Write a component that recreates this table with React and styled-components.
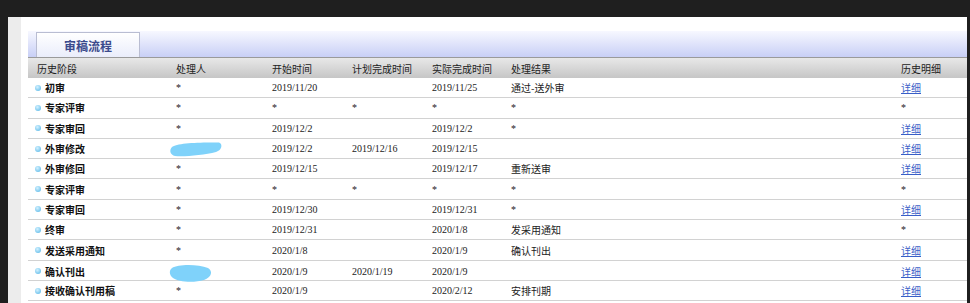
import React from "react";
import styled, { createGlobalStyle } from "styled-components";

const GlobalStyle = createGlobalStyle`
  html, body {
    margin: 0;
    padding: 0;
    background: #1f1f1f;
    overflow: hidden;
  }
`;

const Frame = styled.div`
  display: flex;
  height: 100vh;
  padding: 17px 3px 0 8px;
  box-sizing: border-box;
`;

const Gutter = styled.div`
  width: 13px;
  flex-shrink: 0;
  background: #ececec;
`;

const Panel = styled.div`
  flex: 1;
  background: #fff;
  padding: 14px 0 0 7px;
  overflow: hidden;
`;

const TabBar = styled.div`
  display: flex;
  align-items: flex-end;
  height: 26px;
  padding-left: 8px;
  background: linear-gradient(#f7f8ff, #c8cff6);
`;

const Tab = styled.div`
  width: 104px;
  height: 25px;
  display: flex;
  align-items: center;
  justify-content: center;
  box-sizing: border-box;
  border: 1px solid #b9bdd2;
  border-bottom: none;
  background: linear-gradient(#ffffff, #eaedfb);
  color: #3b4a8c;
  font: bold 12px "Noto Sans CJK SC", sans-serif;
`;

const columns = "148px 96px 80px 80px 79px 390px 1fr";

const HeadRow = styled.div`
  display: grid;
  grid-template-columns: ${columns};
  height: 20px;
  align-items: center;
  border-top: 1px solid #9a9a9a;
  background: linear-gradient(#e8e8e8, #c6c6c6);
  font: 10px "Noto Sans CJK SC", sans-serif;
  color: #222;
`;

const HeadCell = styled.div`
  padding-left: ${(p) => (p.$first ? "9px" : "0")};
  white-space: nowrap;
`;

const Row = styled.div`
  display: grid;
  grid-template-columns: ${columns};
  height: 20.3px;
  box-sizing: border-box;
  align-items: center;
  border-bottom: 1px solid #d2d2d2;
  font-size: 10px;
  color: #222;
`;

const Cell = styled.div`
  display: flex;
  align-items: center;
  white-space: nowrap;
  font-family: ${(p) =>
    p.$serif ? '"Liberation Serif", serif' : '"Noto Sans CJK SC", sans-serif'};
`;

const StageCell = styled(Cell)`
  padding-left: 7px;
  font-weight: bold;
  color: #111;
`;

const Bullet = styled.span`
  width: 6px;
  height: 6px;
  border-radius: 50%;
  margin-right: 4px;
  background: radial-gradient(circle at 40% 35%, #d6f2ff, #4db3e6);
`;

const Link = styled.a`
  color: #3a5fc8;
  text-decoration: underline;
  font-family: "Noto Sans CJK SC", sans-serif;
`;

const Blob = styled.svg`
  margin-left: -6px;
  overflow: visible;
`;

const Redact = ({ wide }) =>
  wide ? (
    <Blob width="52" height="16" viewBox="0 0 52 16">
      <path
        d="M2 6 C6 2, 30 1, 49 1.5 C53 3, 52 9, 46 11 C34 14, 14 16, 5 15 C0 14, -1 9, 2 6 Z"
        fill="#7fd2fa"
      />
    </Blob>
  ) : (
    <Blob width="42" height="18" viewBox="0 0 42 18" style={{ marginTop: 3 }}>
      <path
        d="M2 4 C8 0, 28 0, 38 4 C43 7, 42 13, 34 16 C24 19, 8 18, 3 14 C-1 11, -1 6, 2 4 Z"
        fill="#7fd2fa"
      />
    </Blob>
  );

const heads = [
  "历史阶段",
  "处理人",
  "开始时间",
  "计划完成时间",
  "实际完成时间",
  "处理结果",
  "历史明细",
];

const rows = [
  ["初审", "*", "2019/11/20", "", "2019/11/25", "通过-送外审", "link"],
  ["专家评审", "*", "*", "*", "*", "*", "*"],
  ["专家审回", "*", "2019/12/2", "", "2019/12/2", "*", "link"],
  ["外审修改", "blob-wide", "2019/12/2", "2019/12/16", "2019/12/15", "", "link"],
  ["外审修回", "*", "2019/12/15", "", "2019/12/17", "重新送审", "link"],
  ["专家评审", "*", "*", "*", "*", "*", "*"],
  ["专家审回", "*", "2019/12/30", "", "2019/12/31", "*", "link"],
  ["终审", "*", "2019/12/31", "", "2020/1/8", "发采用通知", "*"],
  ["发送采用通知", "*", "2020/1/8", "", "2020/1/9", "确认刊出", "link"],
  ["确认刊出", "blob", "2020/1/9", "2020/1/19", "2020/1/9", "", "link"],
  ["接收确认刊用稿", "*", "2020/1/9", "", "2020/2/12", "安排刊期", "link"],
];

const isSerif = (v) => /^[\d/*]*$/.test(v);

function renderCell(value, i) {
  if (value === "link")
    return (
      <Cell key={i}>
        <Link href="#">详细</Link>
      </Cell>
    );
  if (value === "blob-wide")
    return (
      <Cell key={i}>
        <Redact wide />
      </Cell>
    );
  if (value === "blob")
    return (
      <Cell key={i}>
        <Redact />
      </Cell>
    );
  return (
    <Cell key={i} $serif={isSerif(value)}>
      {value}
    </Cell>
  );
}

export default function App() {
  return (
    <>
      <GlobalStyle />
      <Frame>
        <Gutter />
        <Panel>
          <TabBar>
            <Tab>审稿流程</Tab>
          </TabBar>
          <HeadRow>
            {heads.map((h, i) => (
              <HeadCell key={h} $first={i === 0}>
                {h}
              </HeadCell>
            ))}
          </HeadRow>
          {rows.map((r, idx) => (
            <Row key={idx}>
              <StageCell>
                <Bullet />
                {r[0]}
              </StageCell>
              {r.slice(1).map((v, i) => renderCell(v, i))}
            </Row>
          ))}
        </Panel>
      </Frame>
    </>
  );
}
